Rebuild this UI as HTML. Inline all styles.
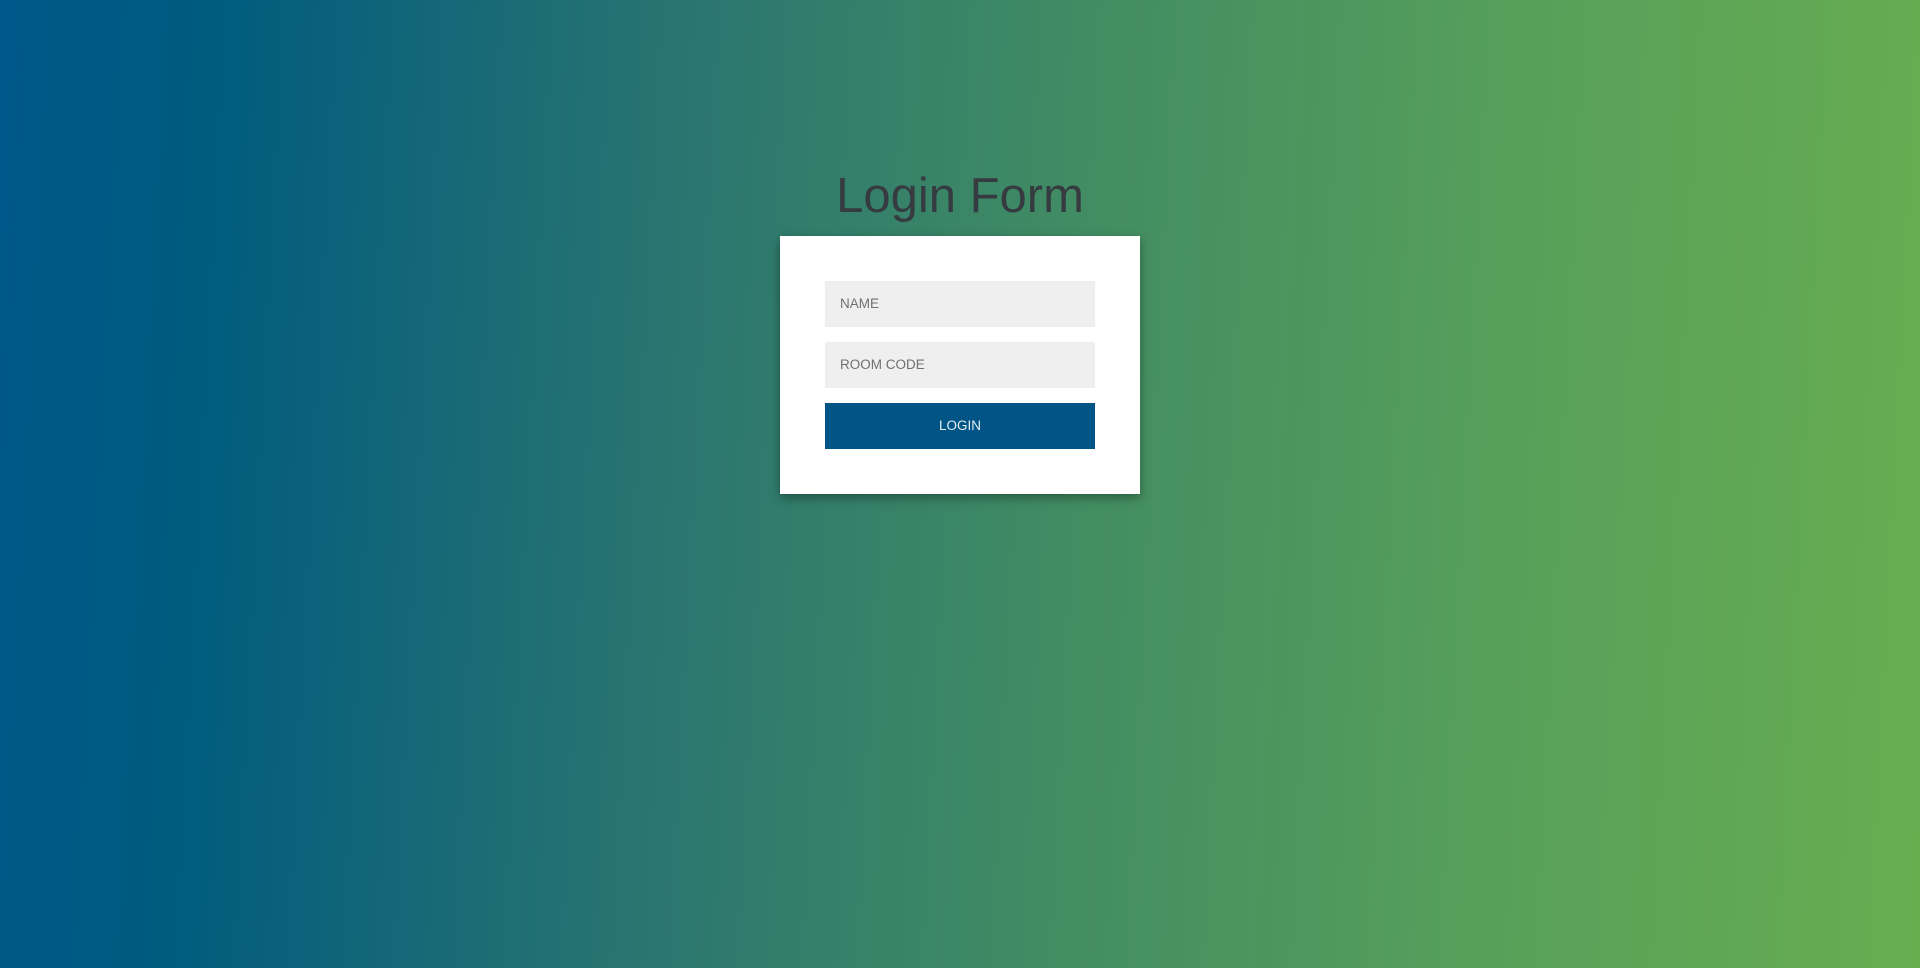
<!DOCTYPE html>
<html><head><meta charset="utf-8"><style>
html,body{margin:0;padding:0;width:1920px;height:968px;overflow:hidden}
body{background:linear-gradient(93deg,#00578a 0%,#005b7e 11%,#2a7570 35%,#418c63 55%,#57a05a 78%,#68ad50 100%);font-family:"Liberation Sans",sans-serif;position:relative}
h1{position:absolute;left:0;width:1920px;top:168px;margin:0;text-align:center;font-weight:normal;font-size:49px;color:#353b40;letter-spacing:0}
.card{position:absolute;left:780px;top:236px;width:360px;height:258px;background:#fff;box-shadow:0 4px 10px rgba(0,0,0,.35)}
.in{position:absolute;left:45px;width:270px;height:46px;background:#efefef;color:#707070;font-size:13.5px;line-height:46px;box-sizing:border-box;padding-left:15px}
.btn{position:absolute;left:45px;top:167px;width:270px;height:46px;background:#005586;color:#e6eef3;font-size:13.5px;line-height:46px;text-align:center}
</style></head><body>
<h1>Login Form</h1>
<div class="card">
<div class="in" style="top:45px">NAME</div>
<div class="in" style="top:106px">ROOM CODE</div>
<div class="btn">LOGIN</div>
</div>
</body></html>
